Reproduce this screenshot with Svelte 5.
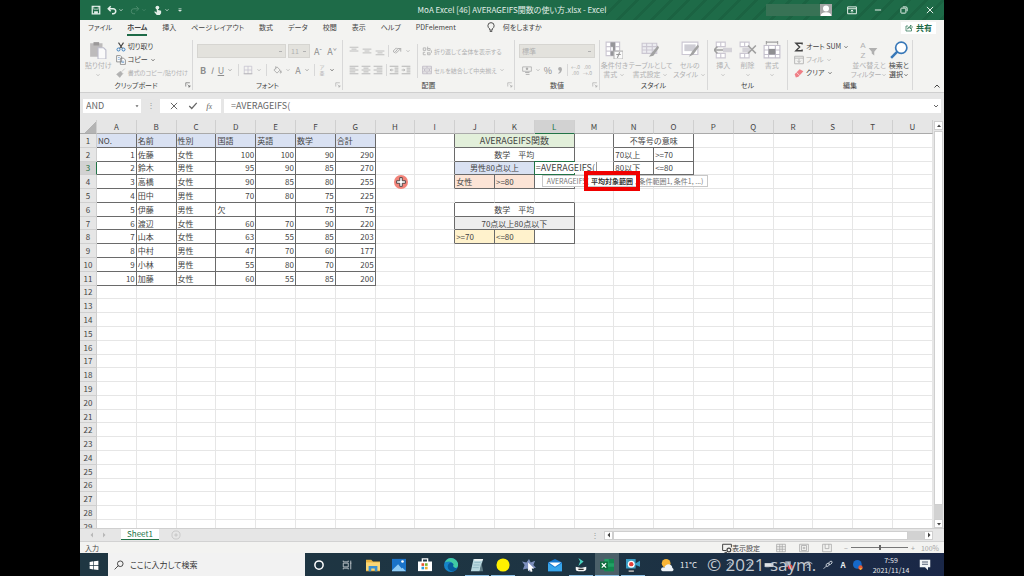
<script>
	// icon shapes, all drawn in a 16 x 16 box
	const icons = {
		caret: '<path d="M4 6l4 4 4-4" fill="none" stroke="currentColor" stroke-width="2"/>',
		save: '<path d="M2 2h12v12H2z" fill="none" stroke="currentColor" stroke-width="2"/><path d="M4 2h8v5H4zM5 10h6v4H5z" fill="currentColor"/><path d="M5 3h6v3H5z" fill="#1e6b48"/>',
		undo: '<path d="M2 6h8a4 4 0 0 1 0 8H8M6 2L2 6l4 4" fill="none" stroke="currentColor" stroke-width="2.4"/>',
		redo: '<path d="M14 6H6a4 4 0 0 0 0 8h2M10 2l4 4-4 4" fill="none" stroke="currentColor" stroke-width="1.6"/>',
		touch: '<circle cx="7" cy="4" r="3" fill="currentColor"/><path d="M6 4h2v4l5 1v4l-2 3H6l-4-5 1-1 3 2z" fill="currentColor"/>',
		customize: '<path d="M5 5h6M5 8h6l-3 3z" fill="currentColor" stroke="currentColor"/>',
		ribbonMode: '<path d="M1 3h14v11H1zM1 6h14M8 12V8M6 10l2-2 2 2" fill="none" stroke="currentColor" stroke-width="1.6"/>',
		minimize: '<path d="M3 8h10" stroke="currentColor" stroke-width="1.6"/>',
		restore: '<rect x="3" y="5" width="8" height="8" rx="1" fill="none" stroke="currentColor" stroke-width="1.6"/><path d="M6 3h5q2 0 2 2v5" fill="none" stroke="currentColor" stroke-width="1.6"/>',
		close: '<path d="M3 3l10 10M13 3L3 13" stroke="currentColor" stroke-width="1.6"/>',
		person: '<path d="M0 0h16v16H0z" fill="#a6a6a6"/><circle cx="8" cy="6" r="4" fill="#fff"/><path d="M1 16q0-5 7-5t7 5z" fill="#fff"/>',
		bulb: '<path d="M6 11Q3 9 3 6a5 5 0 0 1 10 0q0 3-3 5v2H6zM6 15h4" fill="none" stroke="currentColor" stroke-width="1.5"/>',
		share: '<path d="M6 4H2v10h11V9M5 10q1-5 6-5V2l4 4-4 4V7q-4 0-6 3z" fill="none" stroke="currentColor" stroke-width="1.4"/>',
		paste: '<path d="M1 2h11v12H1z" fill="#bdbbbb"/><path d="M4 1h5v3H4z" fill="#9b9999"/><path d="M8 6h5l2 2v8H8z" fill="#fafafa" stroke="#bcbcca"/>',
		cut: '<path d="M4 1l6 9M12 1L6 10" stroke="#444" stroke-width="1.8"/><circle cx="4" cy="12" r="2.4" fill="none" stroke="#3b7fc0" stroke-width="1.6"/><circle cx="12" cy="12" r="2.4" fill="none" stroke="#3b7fc0" stroke-width="1.6"/>',
		copy: '<path d="M1 1h6l2 2v8H1zM7 5h5l3 3v7H7z" fill="#fff" stroke="#777" stroke-width="1.2"/><path d="M9 10h4M9 12h4M3 4h3M3 7h3" stroke="#5a8fc5"/>',
		brush: '<path d="M14 1L9 6M7 5l4 4-2 2-4-4zM5 7l4 4-3 4-5-5z" fill="currentColor" stroke="currentColor"/>',
		launcher: '<path d="M2 12V2h11M7 7l6 6M13 8v5H8" fill="none" stroke="currentColor" stroke-width="1.6"/>',
		borders: '<path d="M2 2h12v12H2zM8 2v12M2 8h12" fill="none" stroke="#c4c0ce" stroke-width="1.2"/><path d="M1 14h14" stroke="#aaa"/>',
		bucket: '<path d="M6 2v5M3 8l5-5 5 5-5 5zM14 9q2 3 0 4t0-4" fill="none" stroke="currentColor" stroke-width="1.5"/>',
		alignTop: '<path d="M1 2h14M4 5h8M1 8h14" stroke="currentColor" stroke-width="1.2"/>',
		alignMid: '<path d="M1 5h14M4 8h8M1 11h14" stroke="currentColor" stroke-width="1.2"/>',
		alignLow: '<path d="M1 8h14M4 11h8M1 14h14" stroke="currentColor" stroke-width="1.2"/>',
		left: '<path d="M1 2h14M1 5h9M1 8h14M1 11h9M1 14h14" stroke="currentColor" stroke-width="1.3"/>',
		center: '<path d="M1 2h14M4 5h8M1 8h14M4 11h8M1 14h14" stroke="currentColor" stroke-width="1.3"/>',
		right: '<path d="M1 2h14M6 5h9M1 8h14M6 11h9M1 14h14" stroke="currentColor" stroke-width="1.3"/>',
		outdent: '<path d="M1 2h14M9 5h6M9 8h6M9 11h6M1 14h14M7 8H2M4 6L2 8l2 2" fill="none" stroke="currentColor" stroke-width="1.4"/>',
		indent: '<path d="M1 2h14M9 5h6M9 8h6M9 11h6M1 14h14M1 8h5M4 6l2 2-2 2" fill="none" stroke="currentColor" stroke-width="1.4"/>',
		orient: '<path d="M2 8l5-5 2 2-5 6zM6 12L14 4M14 9V4H9" fill="none" stroke="currentColor" stroke-width="1.5"/>',
		wrap: '<path d="M2 3h4v4H2zM9 1v6h4V4H9M5 10H2v4h4M9 10v4h4v-3H9M15 7v4" fill="none" stroke="currentColor" stroke-width="1.4"/>',
		merge: '<path d="M1 2h14v12H1zM1 5h14M1 11h14M8 2v3M8 11v3M3 8h10M5 6L3 8l2 2M11 6l2 2-2 2" fill="none" stroke="#b5b0bd" stroke-width="1.2"/>',
		currency: '<path d="M1 3h14v7H1z" fill="none" stroke="currentColor" stroke-width="1.3"/><circle cx="8" cy="6" r="2" fill="currentColor"/><path d="M5 12h7M6 15h6" stroke="currentColor" stroke-width="1.5"/>',
		comma: '<circle cx="8" cy="6" r="3" fill="currentColor"/><path d="M11 6q0 6-5 8l-1-1q3-2 3-5z" fill="currentColor"/>',
		condFormat: '<path d="M1 1h12v12H1zM1 5h12M1 9h12M5 1v12M9 1v12" fill="#fff" stroke="#cbc7d2"/><path d="M5 1h4v4H5zM7 5h2v4H7zM5 9h4v4H5z" fill="#96969a"/><path d="M8 9h8v7H8z" fill="#fafafa" stroke="#b8b8b8"/><path d="M10 12h4M13 10l-2 5" stroke="#999"/>',
		tableFormat: '<path d="M1 2h13v9H1zM1 5h13M1 8h13M5 2v9M10 2v9" fill="#ececf0" stroke="#cbc7d2"/><path d="M15 4l-5 6-3 4 4-1 5-7z" fill="#a2a2a2"/>',
		cellStyle: '<path d="M1 1h14v11H1z" fill="#fff" stroke="#cbc7d2"/><path d="M3 3h10v6H3z" fill="#cfced5"/><path d="M15 3l-5 6-3 5 4-2 5-7z" fill="#a2a2a2"/>',
		insert: '<path d="M2 1h8v4H2zM2 11h8v4H2zM6 1v4M6 11v4" fill="#fff" stroke="#cbc7d2"/><path d="M8 6h8v4H8z" fill="#d4d2d8"/><path d="M8 8H1M3 5L0 8l3 3" fill="none" stroke="#a0a0a0" stroke-width="1.3"/>',
		remove: '<path d="M1 1h8v4H1zM1 11h8v4H1zM5 1v4M5 11v4" fill="#fff" stroke="#cbc7d2"/><path d="M3 6h7v4H3z" fill="#d4d2d8"/><path d="M8 4l7 7M15 4l-7 7" stroke="#a0a0a0" stroke-width="1.3"/>',
		format: '<path d="M1 4h14v11H1zM1 8h14M1 12h14M5 4v11M11 4v11" fill="#fff" stroke="#c4c0cc"/><path d="M5 7h6v5H5z" fill="#8f8f92"/><path d="M3 1h10M3 0v3M13 0v3" stroke="#a0a0a0"/>',
		sum: '<path d="M13 4V2H3l6 6-6 6h10v-2" fill="none" stroke="currentColor" stroke-width="2.2"/>',
		fill: '<path d="M1 2h14v12H1zM1 5h14M8 6v6M5 9l3 3 3-3" fill="none" stroke="currentColor" stroke-width="1.4"/>',
		eraser: '<path d="M1 10l8-8 6 3-8 9-4 1z" fill="#ef7f86"/><path d="M4 7l5 5" stroke="#fff"/>',
		sort: '<path d="M1 3h14l-5 6v6l-4-3V9z" fill="#b0b0b0"/>',
		find: '<circle cx="10" cy="6" r="5" fill="#fff" stroke="#3878b8" stroke-width="1.5"/><path d="M6.5 9.500L1 15" stroke="#3878b8" stroke-width="2.2"/>',
		up: '<path d="M3 11l5-5 5 5" fill="none" stroke="currentColor" stroke-width="2"/>',
		check: '<path d="M2 8l4 4 8-9" fill="none" stroke="currentColor" stroke-width="2"/>',
		triUp: '<path d="M4 10l4-5 4 5z" fill="currentColor"/>',
		triDown: '<path d="M4 6l4 5 4-5z" fill="currentColor"/>',
		triLeft: '<path d="M10 3L5 8l5 5z" fill="currentColor"/>',
		triRight: '<path d="M6 3l5 5-5 5z" fill="currentColor"/>',
		plusCircle: '<circle cx="8" cy="8" r="6.500" fill="none" stroke="currentColor"/><path d="M8 5v6M5 8h6" stroke="currentColor"/>',
		display: '<path d="M7 12H1V2h14v5M4 15h4" fill="none" stroke="currentColor" stroke-width="1.6"/><circle cx="11" cy="11" r="3" fill="none" stroke="currentColor" stroke-width="2"/>',
		viewGrid: '<path d="M1 2h14v12H1zM1 6h14M1 10h14M6 2v12M10 2v12" fill="none" stroke="currentColor" stroke-width="1.2"/>',
		viewPage: '<path d="M1 2h14v12H1zM4 4h8v8H4zM6 7h4M6 9h4" fill="none" stroke="currentColor" stroke-width="1.2"/>',
		viewBreak: '<path d="M1 2h14v12H1zM5 2v7h6V2" fill="none" stroke="currentColor" stroke-width="1.2"/>',
		windows: '<path d="M1 3l6-1v6H1zM8 2l7-1v7H8zM1 9h6v6l-6-1zM8 9h7v7l-7-1z" fill="#fff"/>',
		search: '<circle cx="10" cy="6" r="4.500" fill="none" stroke="#333" stroke-width="1.4"/><path d="M7 9l-6 6" stroke="#333" stroke-width="1.4"/>',
		cortana: '<circle cx="8" cy="8" r="5.500" fill="none" stroke="#fff" stroke-width="2"/>',
		taskView: '<path d="M2 1v2h8V1M2 5h8v6H2zM2 15v-2h8v2M14 1v14M13 5h2" fill="none" stroke="#c6cdd1" stroke-width="1.4"/>',
		folder: '<path d="M0 2h6l2 2h8v11H0z" fill="#e9b33f"/><path d="M0 5h16v9H0z" fill="#fbd775"/><path d="M3 15V9h10v6h-3v-3H6v3z" fill="#3c91d0"/>',
		photos: '<path d="M0 1h16v14H0z" fill="#1a73c9"/><path d="M0 14l7-7 4 5 1-1 4 4H0z" fill="#8ecbf5"/><circle cx="12" cy="4" r="1.500" fill="#fff"/>',
		store: '<path d="M5 5V1h6v4" fill="none" stroke="#fff" stroke-width="1.5"/><path d="M0 4h16v11H0z" fill="#fff"/><path d="M4 6h3v3H4z" fill="#e8512c"/><path d="M8 6h3v3H8z" fill="#7bb532"/><path d="M4 10h3v3H4z" fill="#299ee0"/><path d="M8 10h3v3H8z" fill="#f0ae2c"/>',
		edge: '<circle cx="8" cy="8" r="8" fill="#1684c8"/><path d="M1 5q4-7 11-4 5 3 4 8-2 4-6 1 1-5-4-6-3 0-5 1" fill="#41c9a3"/><path d="M5 7q3-4 6 0-2 4 4 5-4 5-9 2-3-3-1-7" fill="#075b9b"/>',
		notepad: '<path d="M4 1h11l-4 14H1z" fill="#b8d8df"/><path d="M5 1h10l-1 2H5z" fill="#edf3f3"/><path d="M5 5h7M4 8h7M3 11h7" stroke="#8fb6c2"/><path d="M13 5l2 10h-4z" fill="#607d86"/>',
		yellow: '<circle cx="8" cy="8" r="7.500" fill="#fff100"/>',
		star: '<path d="M8 1l2 4 5-2-2 5 3 3-5 1-2 4-3-4-5 1 2-5-3-4 5 1z" fill="#7d90bd"/><path d="M7 5l7 7-3 0 1 3-2 1-1-3-2 2z" fill="#fff"/>',
		mail: '<path d="M0 5l8-4 8 4v10H0z" fill="#1678cf"/><path d="M1 5h14L8 10z" fill="#fff"/><path d="M0 6l8 5 8-5v9H0z" fill="#38a6ec"/>',
		filmora: '<path d="M5 0l6 4-6 5 2-5z" fill="#48d1bf"/><path d="M2 10l5 1h2l5-1v3q-1 2-3 2H5q-3 0-3-2z" fill="#f5f5f5"/><path d="M5 13h6" stroke="#333" stroke-width="1.500"/>',
		excel: '<path d="M5 1h11v14H5z" fill="#20a164"/><path d="M10 1h6v5h-6zM5 10h11v5H5z" fill="#12884f"/><path d="M0 4h9v9H0z" fill="#0f6d3e"/><path d="M2 6l5 5M7 6l-5 5" stroke="#fff" stroke-width="1.4"/>',
		camera: '<path d="M0 1h11v11H0zM11 6l5-3v7l-5-2z" fill="#3a9fc6"/><circle cx="6" cy="7" r="4" fill="#fff"/><circle cx="6" cy="7" r="2.500" fill="#e33c37"/><path d="M3 15h6" stroke="#aaa" stroke-width="2"/>',
		weather: '<circle cx="7" cy="6" r="5" fill="#f9b536"/><path d="M3 15q-3-1-1-4 2-1 3 0 1-4 5-4 4 1 4 4 3 2 0 4z" fill="#eef3f7"/>',
		link: '<path d="M1 14l4-4M5 10q-1-4 3-5 3 0 2 3t-5 2M9 5q2-4 5-3 2 3-2 5H9" fill="none" stroke="#cdd3dc" stroke-width="1.500"/>',
		ball: '<circle cx="7" cy="7" r="7" fill="#1668c8"/><circle cx="12" cy="12" r="3.500" fill="#e65b38"/><path d="M10 13h5l-3 3z" fill="#f4c33a"/>',
		note: '<path d="M1 1h14v10h-3v4l-4-4H1z" fill="#f4f5f7"/><path d="M4 4h8M4 7h8" stroke="#1b2a47"/>',
		device: '<path d="M1 5h14v6H1z" fill="#dfe4e8"/>',
		alert: '<path d="M2 2h9v9H2z" fill="#9aa6b4"/><circle cx="10" cy="11" r="4" fill="#e23b35"/>',
		wifi: '<path d="M1 6q7-6 14 0M4 9q4-4 8 0M7 12h2" fill="none" stroke="#b9c2cf" stroke-width="1.500"/>',
		fly: '<path d="M3 8l5-5 5 5M8 3v10" fill="none" stroke="#8795a5" stroke-width="1.500"/>',
		cross: '<path d="M6 1h4v5h5v4h-5v5H6v-5H1V6h5z" fill="#fff" stroke="#333" stroke-width="1.3"/>'
	};

	const menu = ['ファイル', 'ホーム', '挿入', 'ページ レイアウト', '数式', 'データ', '校閲', '表示', 'ヘルプ', 'PDFelement'];
	let activeMenu = $state('ホーム');
	let formula = $state('=AVERAGEIFS(');
	let zoom = $state(50);

	const columns = 'ABCDEFGHIJKLMNOPQRSTU'.split('');
	const rowCount = 29;

	const scores = [
		['NO.', '名前', '性別', '国語', '英語', '数学', '合計'],
		[1, '佐藤', '女性', 100, 100, 90, 290],
		[2, '鈴木', '男性', 95, 90, 85, 270],
		[3, '高橋', '女性', 90, 85, 80, 255],
		[4, '田中', '男性', 70, 80, 75, 225],
		[5, '伊藤', '男性', '欠', '', 75, 75],
		[6, '渡辺', '女性', 60, 70, 90, 220],
		[7, '山本', '女性', 63, 55, 85, 203],
		[8, '中村', '男性', 47, 70, 60, 177],
		[9, '小林', '男性', 55, 80, 70, 205],
		[10, '加藤', '女性', 60, 55, 85, 200]
	];

	// cells outside the score list
	const extra = {
		J1: { text: 'AVERAGEIFS関数', span: 3, fill: 'green' },
		J2: { text: '数学　平均', span: 3 },
		J3: { text: '男性80点以上', span: 2, fill: 'blue' },
		L3: { text: '' },
		J4: { text: '女性', fill: 'orange' },
		K4: { text: '>=80', fill: 'orange' },
		L4: { text: '' },
		J6: { text: '数学　平均', span: 3 },
		J7: { text: '70点以上80点以下', span: 3, fill: 'gray' },
		J8: { text: '>=70', fill: 'yellow' },
		K8: { text: '<=80', fill: 'yellow' },
		L8: { text: '' },
		N1: { text: '不等号の意味', span: 2 },
		N2: { text: '70以上' },
		O2: { text: '>=70' },
		N3: { text: '80以下' },
		O3: { text: '<=80' }
	};

	const boxes = [[0, 0, 6, 10], [9, 0, 11, 3], [9, 5, 11, 7], [13, 0, 14, 2]];

	function boxed(c, r) {
		return boxes.some(([x1, y1, x2, y2]) => c >= x1 && c <= x2 && r >= y1 && r <= y2);
	}

	function buildRow(r) {
		const cells = [];
		for (let c = 0; c < columns.length; c++) {
			const id = columns[c] + (r + 1);
			let cell = extra[id] ?? { text: '' };
			if (scores[r] && c < 7) cell = { text: scores[r][c], fill: r === 0 ? 'blue' : '' };
			const span = cell.span ?? 1;
			const last = c + span - 1;
			cells.push({
				...cell, id, span,
				number: typeof cell.text === 'number',
				right: boxed(last, r) || boxed(last + 1, r),
				bottom: boxed(c, r) || boxed(c, r + 1)
			});
			c = last;
		}
		return cells;
	}

	const rows = Array.from({ length: rowCount }, (_, r) => buildRow(r));

	const apps = ['folder', 'photos', 'store', 'edge', 'notepad', 'yellow', 'star', 'mail', 'filmora', 'excel', 'camera'];
	const running = ['notepad', 'yellow', 'filmora', 'excel', 'camera'];
	const tray = ['fly', 'fly', 'device', 'alert', 'wifi', 'link'];
</script>

{#snippet icon(name, size = 's10')}
	<svg class="icon {size}" viewBox="0 0 16 16" aria-hidden="true">{@html icons[name]}</svg>
{/snippet}

{#snippet tool(name, caret = false)}
	<button class="tool" aria-label={name}>
		{@render icon(name)}
		{#if caret}{@render icon('caret', 's6')}{/if}
	</button>
{/snippet}

{#snippet big(name, first, second = '', dim = true)}
	<button class="big" class:dim>
		{@render icon(name, 's18')}
		<span>{first}</span>
		<span class="second">{second}{@render icon('caret', 's6')}</span>
	</button>
{/snippet}

{#snippet groupName(text, launcher = false, dark = false)}
	<div class="group-name">
		<span>{text}</span>
		{#if launcher}<button class="launcher" class:dark aria-label="{text}の設定">{@render icon('launcher', 's6')}</button>{/if}
	</div>
{/snippet}

<div class="desktop">
	<header class="titlebar">
		<div class="quick">
			<button aria-label="保存">{@render icon('save')}</button>
			<button aria-label="元に戻す">{@render icon('undo')}{@render icon('caret', 's6')}</button>
			<button class="faded" aria-label="やり直し">{@render icon('redo')}{@render icon('caret', 's6')}</button>
			<button aria-label="タッチ">{@render icon('touch')}{@render icon('caret', 's6')}</button>
			<button aria-label="カスタマイズ">{@render icon('customize', 's8')}</button>
		</div>
		<h1>MoA Excel [46] AVERAGEIFS関数の使い方.xlsx - Excel</h1>
		<div class="window-buttons">
			<span class="account"></span>
			{@render icon('person', 's12')}
			<button aria-label="リボンの表示">{@render icon('ribbonMode')}</button>
			<button aria-label="最小化">{@render icon('minimize')}</button>
			<button aria-label="元に戻す(縮小)">{@render icon('restore')}</button>
			<button aria-label="閉じる">{@render icon('close')}</button>
		</div>
	</header>

	<nav class="menu">
		{#each menu as item}
			<button class:active={item === activeMenu} onclick={() => activeMenu = item}>{item}</button>
		{/each}
		<button class="tell">{@render icon('bulb')}何をしますか</button>
		<button class="share">{@render icon('share', 's8')}共有</button>
	</nav>

	<section class="ribbon">
		<div class="group">
			<div class="body clipboard">
				{@render big('paste', '貼り付け')}
				<div class="stack">
					<button class="line">{@render icon('cut')}切り取り</button>
					<button class="line">{@render icon('copy')}コピー {@render icon('caret', 's6')}</button>
					<button class="line long dim">{@render icon('brush')}書式のコピー/貼り付け</button>
				</div>
			</div>
			{@render groupName('クリップボード', true, true)}
		</div>

		<div class="group">
			<div class="body toolrows">
				<div class="toolrow start">
					<select class="font-name" aria-label="フォント"><option></option></select>
					<select class="font-size" aria-label="フォント サイズ"><option>11</option></select>
					<button class="tool letter">A<sup>ˆ</sup></button>
					<button class="tool letter">A<sup>ˇ</sup></button>
				</div>
				<div class="toolrow">
					<button class="tool letter"><b>B</b></button>
					<button class="tool letter"><i>I</i></button>
					<button class="tool letter"><u>U</u>{@render icon('caret', 's6')}</button>
					<span class="bar"></span>
					{@render tool('borders', true)}
					<span class="bar"></span>
					{@render tool('bucket', true)}
					<button class="tool letter">A{@render icon('caret', 's6')}</button>
					<span class="bar"></span>
					<button class="tool ruby"><span>ア</span><span>亜</span></button>
					{@render icon('caret', 's6')}
				</div>
			</div>
			{@render groupName('フォント', true)}
		</div>

		<div class="group">
			<div class="body align">
				<div class="toolrows">
					<div class="toolrow">
						{@render tool('alignTop')}{@render tool('alignMid')}{@render tool('alignLow')}
						<span class="bar"></span>
						{@render tool('orient', true)}
					</div>
					<div class="toolrow">
						{@render tool('left')}{@render tool('center')}{@render tool('right')}
						<span class="bar"></span>
						{@render tool('outdent')}{@render tool('indent')}
					</div>
				</div>
				<span class="bar tall"></span>
				<div class="toolrows">
					<button class="line long dim">{@render icon('wrap')}折り返して全体を表示する</button>
					<button class="line long dim">{@render icon('merge')}セルを結合して中央揃え {@render icon('caret', 's6')}</button>
				</div>
			</div>
			{@render groupName('配置', true)}
		</div>

		<div class="group">
			<div class="body toolrows">
				<div class="toolrow">
					<select class="number-format" aria-label="表示形式"><option>標準</option></select>
				</div>
				<div class="toolrow">
					{@render tool('currency', true)}
					<button class="tool letter">%</button>
					{@render tool('comma')}
					<span class="bar"></span>
					<button class="tool decimal"><span>←.0</span><span>.00</span></button>
					<button class="tool decimal"><span>.00</span><span>→.0</span></button>
				</div>
			</div>
			{@render groupName('数値', true)}
		</div>

		<div class="group">
			<div class="body bigs">
				{@render big('condFormat', '条件付き', '書式')}
				{@render big('tableFormat', 'テーブルとして', '書式設定')}
				{@render big('cellStyle', 'セルの', 'スタイル')}
			</div>
			{@render groupName('スタイル')}
		</div>

		<div class="group">
			<div class="body bigs">
				{@render big('insert', '挿入')}
				{@render big('remove', '削除')}
				{@render big('format', '書式')}
			</div>
			{@render groupName('セル')}
		</div>

		<div class="group">
			<div class="body editing">
				<div class="stack">
					<button class="line">{@render icon('sum')}オート SUM {@render icon('caret', 's6')}</button>
					<button class="line dim">{@render icon('fill')}フィル {@render icon('caret', 's6')}</button>
					<button class="line">{@render icon('eraser')}クリア {@render icon('caret', 's6')}</button>
				</div>
				<button class="big dim">
					<span class="sort-art"><span class="az"><span>A</span><span>Z</span></span>{@render icon('sort')}</span>
					<span>並べ替えと</span>
					<span class="second">フィルター{@render icon('caret', 's6')}</span>
				</button>
				{@render big('find', '検索と', '選択', false)}
			</div>
			{@render groupName('編集')}
		</div>

		<button class="collapse" aria-label="リボンを折りたたむ">{@render icon('up', 's8')}</button>
	</section>

	<section class="formula-bar">
		<label class="name-box">
			<input value="AND" aria-label="名前ボックス">
			{@render icon('triDown', 's6')}
		</label>
		<span class="grip">⋮</span>
		<div class="formula-buttons">
			<button aria-label="キャンセル">{@render icon('close')}</button>
			<button aria-label="入力">{@render icon('check')}</button>
			<button class="fx">f<sub>x</sub></button>
		</div>
		<label class="formula">
			<input bind:value={formula} aria-label="数式バー">
			{@render icon('caret', 's8')}
		</label>
	</section>

	<main class="sheet">
		<div class="cells">
			<table>
				<thead>
					<tr>
						<th class="corner"></th>
						{#each columns as column}
							<th class:current={column === 'L'}>{column}</th>
						{/each}
					</tr>
				</thead>
				<tbody>
					{#each rows as row, r}
						<tr>
							<th class:current={r === 2}>{r + 1}</th>
							{#each row as cell}
								<td
									colspan={cell.span}
									class={cell.fill}
									class:number={cell.number}
									class:merged={cell.span > 1}
									class:right={cell.right}
									class:bottom={cell.bottom}
									class:anchor={['H4', 'L3', 'L4'].includes(cell.id)}
								>{cell.text}{#if cell.id === 'L3'}<span class="frame"></span><span class="edit">{formula}</span>
								{:else if cell.id === 'L4'}<span class="hint">AVERAGEIFS(<strong>平均対象範囲</strong>, 条件範囲1, 条件1, ...)</span>
								{:else if cell.id === 'H4'}<span class="pointer">{@render icon('cross')}</span>{/if}</td>
							{/each}
						</tr>
					{/each}
				</tbody>
			</table>
		</div>
		<div class="vscroll">
			<button aria-label="上へ">{@render icon('triUp', 's8')}</button>
			<span class="thumb"></span>
			<span class="track"></span>
			<button aria-label="下へ">{@render icon('triDown', 's8')}</button>
		</div>
	</main>

	<section class="sheet-tabs">
		<div class="tab-arrows">{@render icon('triLeft', 's8')}{@render icon('triRight', 's8')}</div>
		<button class="sheet-tab">Sheet1</button>
		<button class="add" aria-label="新しいシート">{@render icon('plusCircle')}</button>
		<div class="hscroll">
			<span class="grip">⋮</span>
			<button aria-label="左へ">{@render icon('triLeft', 's8')}</button>
			<span class="thumb"></span>
			<span class="track"></span>
			<button aria-label="右へ">{@render icon('triRight', 's8')}</button>
		</div>
	</section>

	<footer class="status">
		<span class="mode">入力</span>
		<button class="display">{@render icon('display')}表示設定</button>
		<div class="views">
			<button aria-label="標準">{@render icon('viewGrid')}</button>
			<button aria-label="ページ レイアウト">{@render icon('viewPage')}</button>
			<button aria-label="改ページ プレビュー">{@render icon('viewBreak')}</button>
		</div>
		<div class="zoom">
			<span>−</span>
			<input type="range" aria-label="ズーム" min="0" max="100" bind:value={zoom}>
			<span>+</span>
		</div>
		<span class="percent">100%</span>
	</footer>

	<div class="taskbar">
		<button class="start" aria-label="スタート">{@render icon('windows')}</button>
		<label class="search">
			{@render icon('search')}
			<input placeholder="ここに入力して検索" aria-label="検索">
		</label>
		<button class="system" aria-label="Cortana">{@render icon('cortana', 's12')}</button>
		<button class="system" aria-label="タスク ビュー">{@render icon('taskView')}</button>
		{#each apps as app}
			<button class="app" class:running={running.includes(app)} class:focused={app === 'excel'} aria-label={app}>
				{@render icon(app, 's14')}
			</button>
		{/each}
		<div class="tray">
			{@render icon('weather', 's14')}
			<span class="degrees">11°C</span>
			<div class="tray-icons">
				{#each tray as name}{@render icon(name)}{/each}
				<span class="mark">© 2021-saym.</span>
			</div>
			<b class="ime">A</b>
			{@render icon('ball')}
			<div class="clock"><span>7:59</span><span>2021/11/14</span></div>
			{@render icon('note', 's12')}
		</div>
	</div>
</div>

<style>
	:global(body) {
		background: #000;
	}

	.desktop {
		display: flex;
		flex-direction: column;
		height: 100vh;
		margin: 0 80px;
		overflow: hidden;
		background: #e6e6e6;
		color: #444;
		font-family: "Noto Sans CJK JP", sans-serif;
		font-size: 8px;
		line-height: 12px;
	}

	.desktop * {
		box-sizing: border-box;
	}

	button, input, select {
		margin: 0;
		padding: 0;
		border: 0;
		border-radius: 0;
		background: none;
		color: inherit;
		font: inherit;
	}

	button {
		display: flex;
		align-items: center;
		justify-content: center;
		font-feature-settings: inherit;
		white-space: nowrap;
	}

	input {
		min-width: 0;
		outline: none;
	}

	.icon {
		display: block;
		flex: none;
		width: 10px;
		height: 10px;
	}

	.s6 { width: 6px; height: 6px; }
	.s8 { width: 8px; height: 8px; }
	.s12 { width: 12px; height: 12px; }
	.s14 { width: 14px; height: 14px; }
	.s18 { width: 18px; height: 18px; }

	.dim {
		color: #b1b1b1;
	}

	/* title bar */
	.titlebar {
		display: grid;
		grid-template-columns: 1fr auto 1fr;
		align-items: center;
		flex: none;
		height: 20px;
		background: #1e6b48;
		color: #e4efe9;
	}

	.titlebar h1 {
		margin: 0;
		font-size: 8px;
		font-weight: 400;
		font-feature-settings: "palt";
	}

	.quick {
		display: flex;
		gap: 6px;
		padding-left: 11px;
	}

	.quick button {
		gap: 1px;
	}

	.faded {
		color: #4b8b6c;
	}

	.window-buttons {
		display: flex;
		align-items: center;
		align-self: stretch;
		justify-content: flex-end;
		padding-right: 1px;
		background: repeating-linear-gradient(135deg, transparent 0 9px, #1b6342 9px 12px);
	}

	.window-buttons button {
		width: 26px;
	}

	.window-buttons .icon + button {
		margin-left: 7px;
	}

	.account {
		width: 54px;
		height: 12px;
		background: #387255;
	}

	/* menu */
	.menu {
		display: flex;
		flex: none;
		gap: 15px;
		height: 18px;
		padding: 0 8px;
		background: #f3f3f1;
		font-size: 7px;
		font-feature-settings: "palt";
	}

	.menu button {
		height: 16px;
		border-bottom: 2px solid transparent;
	}

	.menu .active {
		border-color: #1e6b48;
		font-weight: 700;
	}

	.menu .tell {
		gap: 7px;
		margin-left: 15px;
	}

	.menu .share {
		gap: 3px;
		height: 12px;
		margin: 2px 0 0 auto;
		padding: 0 4px;
		border: 0;
		background: #fff;
		color: #1e6b48;
		font-size: 8px;
		font-weight: 700;
	}

	/* ribbon */
	.ribbon {
		display: grid;
		grid-template-columns: minmax(0, 113fr) minmax(0, 150fr) minmax(0, 172fr) minmax(0, 85fr) minmax(0, 108fr) minmax(0, 80fr) minmax(0, 125fr) minmax(0, 31fr);
		flex: none;
		height: 55px;
		border-bottom: 1px solid #cfcfcf;
		background: #f3f3f1;
		font-size: 7px;
		line-height: 9px;
		font-feature-settings: "palt";
	}

	.group {
		display: flex;
		flex-direction: column;
		margin: 2px 0;
		border-right: 1px solid #d8d8d8;
	}

	.body {
		display: flex;
		flex: 1;
		min-height: 0;
	}

	.group-name {
		display: flex;
		align-items: center;
		justify-content: center;
		position: relative;
		height: 10px;
	}

	.launcher {
		position: absolute;
		right: 1px;
		color: #a4a4a4;
	}

	.launcher.dark {
		color: #555;
	}

	.big {
		flex-direction: column;
		justify-content: flex-start;
		gap: 0;
		padding-top: 1px;
	}

	.big .icon.s18 {
		margin-bottom: 2px;
	}

	.second {
		display: flex;
		align-items: center;
		gap: 2px;
		height: 9px;
	}

	.clipboard {
		gap: 4px;
		padding-left: 5px;
	}

	.stack {
		display: flex;
		flex-direction: column;
		justify-content: space-between;
		padding-bottom: 1px;
	}

	.line {
		justify-content: flex-start;
		gap: 2px;
		height: 13px;
	}

	.line.long {
		font-size: 6px;
	}

	.toolrows {
		display: flex;
		flex: none;
		flex-direction: column;
		gap: 5px;
		padding: 4px 4px 0;
	}

	.body.toolrows {
		flex: 1;
	}

	.toolrow {
		display: flex;
		align-items: center;
		justify-content: space-between;
		height: 14px;
	}

	.toolrow.start {
		justify-content: flex-start;
		gap: 2px;
	}

	.toolrow + .toolrow {
		padding: 0 3px;
	}

	.toolrows .line {
		height: 14px;
	}

	.tool {
		gap: 3px;
		color: #adadad;
	}

	.letter {
		color: #8d8d8d;
		font-size: 9px;
	}

	.start .letter {
		gap: 0;
		width: 12px;
	}

	.letter sup {
		font-size: 7px;
		line-height: 7px;
	}

	.ruby, .decimal {
		flex-direction: column;
		gap: 0;
		font-size: 5px;
		line-height: 6px;
	}

	.bar {
		width: 1px;
		height: 12px;
		background: #d8d8d8;
	}

	.bar.tall {
		height: 34px;
		margin-top: 4px;
	}

	select {
		height: 14px;
		padding: 0 2px;
		border: 1px solid #d6d5d1;
		background: #e3e2dd;
		color: #b1b1b1;
		appearance: none;
		background-image: linear-gradient(#b1b1b1, #b1b1b1);
		background-repeat: no-repeat;
		background-position: right 3px center;
		background-size: 3px 1px;
	}

	.font-name {
		flex: 1;
	}

	.font-size {
		width: 22px;
	}

	.number-format {
		width: 100%;
	}

	.align .toolrows:first-child {
		width: 74px;
	}

	.align .toolrows .toolrow {
		padding: 0 2px;
	}

	.bigs {
		justify-content: space-evenly;
	}

	.editing {
		justify-content: space-between;
		padding: 0 3px 0 6px;
	}

	.editing .second {
		gap: 0;
	}

	.sort-art {
		display: flex;
		align-items: center;
		gap: 2px;
		height: 20px;
	}

	.az {
		display: flex;
		flex-direction: column;
		font-family: "Liberation Sans", sans-serif;
		font-size: 8px;
		line-height: 10px;
	}

	.collapse {
		align-self: end;
		justify-self: end;
		padding: 0 3px 2px 0;
	}

	/* formula bar */
	.formula-bar {
		display: flex;
		flex: none;
		height: 27px;
		padding: 6px 3px 7px;
		color: #666;
	}

	.name-box, .formula-buttons, .formula {
		display: flex;
		align-items: center;
		background: #fff;
	}

	.name-box {
		width: 58px;
		padding: 0 1px 0 3px;
	}

	.name-box input, .formula input {
		flex: 1;
		font-size: 9px;
	}

	.grip {
		width: 19px;
		color: #999;
		text-align: center;
	}

	.formula-buttons {
		justify-content: space-evenly;
		width: 61px;
		margin-right: 3px;
	}

	.fx {
		font: italic 9px "Liberation Serif", serif;
	}

	.formula {
		flex: 1;
		padding: 0 1px 0 7px;
	}

	/* sheet */
	.sheet {
		display: flex;
		flex: 1;
		min-height: 0;
	}

	.cells {
		flex: 1;
		overflow: hidden;
		background: #fff;
	}

	table {
		width: 100%;
		height: 414px;
		border-collapse: separate;
		border-spacing: 0;
		table-layout: fixed;
	}

	th, td {
		padding: 0;
		border: 0 solid #e6e6e6;
		border-width: 0 1px 1px 0;
		font-weight: 400;
		line-height: 11px;
		white-space: nowrap;
	}

	th {
		border-color: #cfcfcf;
		background: #e6e6e6;
	}

	thead th {
		height: 14px;
		border-bottom-color: #aaa;
	}

	thead .current {
		border-bottom-color: #217346;
		background: #d2d2d2;
		color: #217346;
	}

	tbody .current {
		border-right-color: #217346;
		background: #d2d2d2;
		color: #217346;
	}

	.corner {
		width: 17px;
		background: linear-gradient(135deg, #e6e6e6 60%, #b4b4b4 60%);
	}

	td {
		padding: 0 1px;
	}

	.number { text-align: right; }
	.merged { text-align: center; }
	.right { border-right-color: #6a6a6a; }
	.bottom { border-bottom-color: #6a6a6a; }
	.blue { background: #d9e1f2; }
	.green { background: #e2efda; font-size: 9px; }
	.orange { background: #fce4d6; }
	.gray { background: #ededed; }
	.yellow { background: #fff2cc; }

	.anchor {
		position: relative;
	}

	.frame {
		position: absolute;
		inset: -1px;
		border: 1px solid #217346;
	}

	.edit {
		position: absolute;
		top: 0;
		left: 1px;
		z-index: 1;
		padding-right: 1px;
		border-right: 1px solid #999;
		background: #fff;
		font-size: 9px;
	}

	.hint {
		position: absolute;
		top: 0;
		left: 7px;
		z-index: 2;
		padding: 0 4px;
		border: 1px solid #c8c8c8;
		background: #fff;
		color: #777;
		font-size: 7px;
		line-height: 10px;
	}

	.hint strong {
		position: relative;
		margin: 0 2px;
		color: #333;
	}

	.hint strong::after {
		position: absolute;
		inset: -5px -7px;
		border: 4px solid #f00000;
		content: "";
	}

	.pointer {
		position: absolute;
		top: 0;
		right: 6px;
		z-index: 2;
		padding: 2px;
		border-radius: 50%;
		background: #f28379;
	}

	.vscroll {
		display: flex;
		flex-direction: column;
		width: 11px;
		padding: 1px 1px 0;
	}

	.vscroll button, .hscroll button {
		width: 9px;
		height: 9px;
		border: 1px solid #cfcfcf;
		background: #fff;
	}

	.vscroll .thumb {
		flex: 1;
		margin-top: 1px;
		border: 1px solid #cfcfcf;
		background: #fff;
	}

	.track {
		width: 16px;
		height: 9px;
		background: #d2d2d2;
	}

	.vscroll .track {
		width: 9px;
		height: 14px;
	}

	.sheet-tabs {
		display: flex;
		flex: none;
		height: 13px;
		border-top: 1px solid #cfcfcf;
	}

	.tab-arrows {
		display: flex;
		align-items: center;
		gap: 4px;
		width: 41px;
		padding-left: 8px;
		color: #b8b8b8;
	}

	.sheet-tab {
		width: 38px;
		height: 11px;
		border-bottom: 1px solid #217346;
		background: #fff;
		color: #217346;
	}

	.add {
		margin-left: 12px;
		color: #b8b8b8;
	}

	.hscroll {
		display: flex;
		align-items: center;
		width: 359px;
		margin-left: auto;
		padding-right: 11px;
	}

	.hscroll .thumb {
		flex: 1;
		height: 9px;
		border: 1px solid #cfcfcf;
		background: #fff;
	}

	/* status bar */
	.status {
		display: flex;
		align-items: center;
		flex: none;
		height: 12px;
		padding: 0 5px;
		border-top: 1px solid #d2d2d2;
		background: #f3f3f1;
		font-size: 7px;
	}

	.mode {
		margin-right: auto;
	}

	.views {
		display: flex;
		gap: 13px;
		margin: 0 12px 0 16px;
		color: #a4a4a4;
	}

	.zoom {
		display: flex;
		align-items: center;
		gap: 3px;
	}

	.zoom span, .percent {
		color: #a4a4a4;
	}

	.percent {
		margin-left: 6px;
	}

	.zoom input {
		width: 57px;
		height: 5px;
		appearance: none;
		background: linear-gradient(#777, #777) center / 100% 1px no-repeat;
	}

	.zoom input::-webkit-slider-thumb {
		width: 2px;
		height: 5px;
		background: #666;
		appearance: none;
	}

	/* taskbar */
	.taskbar {
		display: flex;
		flex: none;
		height: 23px;
		background: linear-gradient(90deg, #1f3642, #1d3443 60%, #1a2747);
		color: #e8ecef;
	}

	.taskbar .start {
		width: 28px;
	}

	.search {
		display: flex;
		align-items: center;
		flex: 0 1 197px;
		gap: 6px;
		padding-left: 6px;
		background: #f2f2f2;
		color: #333;
	}

	.search input {
		flex: 1;
		font-feature-settings: "palt";
	}

	.search input::placeholder {
		color: #333;
		opacity: 1;
	}

	.system {
		width: 28px;
	}

	.app {
		width: 24px;
		margin-right: 2px;
		border: 0 solid transparent;
		border-width: 1px 0;
	}

	.running {
		border-bottom-color: #8fc3e8;
	}

	.focused {
		background: #4b6069;
	}

	.tray {
		display: flex;
		align-items: center;
		gap: 6px;
		margin-left: auto;
		padding-right: 13px;
	}

	.tray-icons {
		display: flex;
		justify-content: space-between;
		position: relative;
		width: 130px;
		padding-left: 22px;
	}

	.mark {
		position: absolute;
		top: -5px;
		left: 4px;
		color: #c3c9d0;
		font-family: "Open Sans", sans-serif;
		font-size: 17px;
		line-height: 20px;
		white-space: nowrap;
	}

	.ime {
		width: 8px;
		text-align: center;
	}

	.clock {
		display: flex;
		flex-direction: column;
		align-items: center;
		width: 44px;
		font-size: 7px;
		line-height: 10px;
	}
</style>
